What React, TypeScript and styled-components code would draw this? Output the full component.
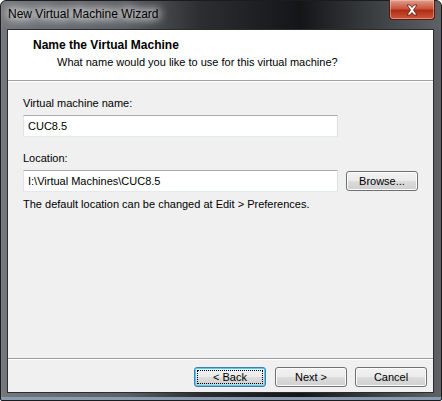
import styled, { createGlobalStyle } from "styled-components";

const GlobalStyle = createGlobalStyle`
  html, body {
    margin: 0;
    padding: 0;
    background: #ffffff;
  }
  body {
    font-family: "Liberation Sans", Arial, sans-serif;
  }
`;

const uiFont = `"Liberation Sans", Arial, sans-serif`;

const Window = styled.div`
  width: 442px;
  height: 401px;
  box-sizing: border-box;
  display: flex;
  flex-direction: column;
  padding: 0 7px 7px 6px;
  border: 1px solid #1b1c1e;
  border-radius: 6px 6px 2px 2px;
  background: linear-gradient(
    to right,
    #74787c 0%,
    #5e6266 28%,
    #2c2e31 45%,
    #141517 68%,
    #3e4245 86%,
    #5e6266 100%
  );
  box-shadow: inset 0 -3px 0 #8a9ab0, inset 1px 0 0 #7d8185;
`;

const TitleBar = styled.div`
  height: 28px;
  display: flex;
  align-items: flex-start;
`;

const Title = styled.span`
  margin-top: 6px;
  padding: 0 1px;
  font-family: ${uiFont};
  font-size: 12px;
  color: #000;
  text-shadow: 0 0 8px #ffffff, 0 0 10px #ffffff, 0 0 12px #e8e8e8;
`;

const CloseButton = styled.div`
  margin-left: auto;
  margin-right: -1px;
  margin-top: -1px;
  width: 46px;
  height: 20px;
  box-sizing: border-box;
  border: 1px solid #5a1a10;
  border-top: none;
  border-radius: 0 0 4px 4px;
  background: linear-gradient(to bottom, #e0a090 0%, #c8553d 45%, #b22c14 55%, #c65a3e 100%);
  box-shadow: inset 0 0 0 1px rgba(255, 210, 190, 0.45);
  display: flex;
  align-items: center;
  justify-content: center;
`;

const Client = styled.div`
  flex: 1;
  display: flex;
  flex-direction: column;
  background: #f0f0f0;
  border: 1px solid #2a2d30;
`;

const Header = styled.div`
  height: 51px;
  box-sizing: border-box;
  background: #ffffff;
  border-bottom: 1px solid #a0a0a0;
  padding: 7px 0 0 25px;
  font-family: ${uiFont};
  color: #000;
`;

const HeaderTitle = styled.div`
  font-size: 12px;
  font-weight: 700;
  line-height: 16px;
`;

const HeaderSub = styled.div`
  margin-top: 1px;
  padding-left: 24px;
  font-size: 11px;
  line-height: 16px;
`;

const Body = styled.div`
  flex: 1;
  border-top: 1px solid #ffffff;
  padding: 13px 15px 0 15px;
  display: flex;
  flex-direction: column;
`;

const Label = styled.div<{ $gap?: number }>`
  margin-top: ${(p) => p.$gap ?? 0}px;
  font-family: ${uiFont};
  font-size: 11px;
  line-height: 16px;
  color: #000;
`;

const Row = styled.div`
  display: flex;
  align-items: center;
  gap: 8px;
  margin-top: 4px;
`;

const TextField = styled.div`
  width: 315px;
  height: 22px;
  box-sizing: border-box;
  border: 1px solid #abadb3;
  border-left-color: #e2e3ea;
  border-right-color: #dbdfe6;
  border-bottom-color: #e3e9ef;
  border-radius: 1px;
  background: #ffffff;
  padding: 0 4px;
  display: flex;
  align-items: center;
  font-family: ${uiFont};
  font-size: 11px;
  color: #000;
  white-space: nowrap;
`;

const Button = styled.div<{ $focused?: boolean }>`
  width: 72px;
  height: 20px;
  box-sizing: border-box;
  border: 1px solid ${(p) => (p.$focused ? "#3c7fb1" : "#707070")};
  border-radius: 3px;
  background: linear-gradient(to bottom, #f2f2f2 0%, #ebebeb 50%, #dddddd 51%, #cfcfcf 100%);
  box-shadow: inset 0 0 0 1px ${(p) => (p.$focused ? "#48d0f5" : "#fcfcfc")};
  display: flex;
  align-items: center;
  justify-content: center;
  font-family: ${uiFont};
  font-size: 11px;
  color: #000;
  position: relative;

  &::after {
    content: "";
    display: ${(p) => (p.$focused ? "block" : "none")};
    position: absolute;
    inset: 2px;
    border: 1px dotted #000;
  }
`;

const Hint = styled.div`
  margin-top: 4px;
  font-family: ${uiFont};
  font-size: 11px;
  line-height: 16px;
  color: #000;
`;

const Footer = styled.div`
  height: 34px;
  box-sizing: border-box;
  border-top: 1px solid #a0a0a0;
  box-shadow: inset 0 1px 0 #ffffff;
  display: flex;
  align-items: flex-start;
  justify-content: flex-end;
  padding: 8px 6px 0 0;
  gap: 8px;
`;

const ButtonGroup = styled.div`
  display: flex;
  gap: 9px;
`;

const CloseGlyph = () => (
  <svg width="14" height="12" viewBox="0 0 14 12">
    <path
      d="M2 1 L5 1 L7 3.5 L9 1 L12 1 L8.5 6 L12 11 L9 11 L7 8.5 L5 11 L2 11 L5.5 6 Z"
      fill="#ffffff"
      stroke="#5c1a10"
      strokeWidth="0.8"
      strokeLinejoin="round"
    />
  </svg>
);

export default function App() {
  return (
    <>
      <GlobalStyle />
      <Window>
        <TitleBar>
          <Title>New Virtual Machine Wizard</Title>
          <CloseButton>
            <CloseGlyph />
          </CloseButton>
        </TitleBar>
        <Client>
          <Header>
            <HeaderTitle>Name the Virtual Machine</HeaderTitle>
            <HeaderSub>What name would you like to use for this virtual machine?</HeaderSub>
          </Header>
          <Body>
            <Label>Virtual machine name:</Label>
            <Row>
              <TextField>CUC8.5</TextField>
            </Row>
            <Label $gap={13}>Location:</Label>
            <Row>
              <TextField>I:\Virtual Machines\CUC8.5</TextField>
              <Button>Browse...</Button>
            </Row>
            <Hint>The default location can be changed at Edit &gt; Preferences.</Hint>
          </Body>
          <Footer>
            <ButtonGroup>
              <Button $focused>&lt; Back</Button>
              <Button>Next &gt;</Button>
            </ButtonGroup>
            <Button>Cancel</Button>
          </Footer>
        </Client>
      </Window>
    </>
  );
}
